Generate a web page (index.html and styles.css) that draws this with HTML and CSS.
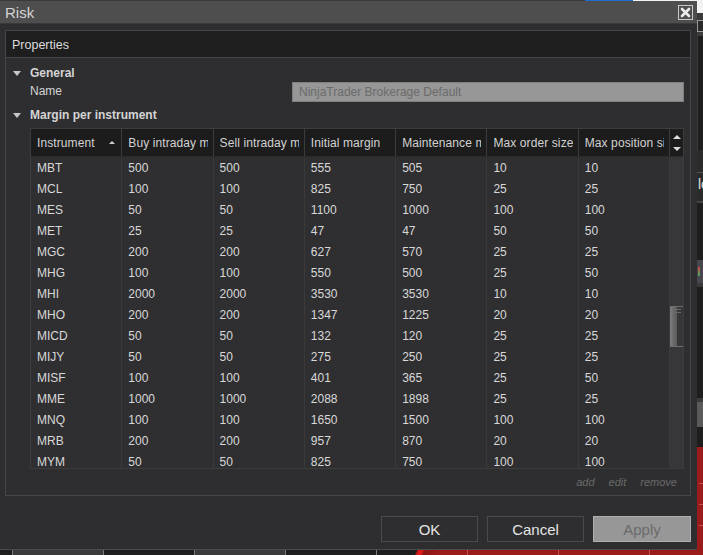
FILE: index.html
```html
<!DOCTYPE html>
<html>
<head>
<meta charset="utf-8">
<title>Risk</title>
<link rel="stylesheet" href="styles.css">
</head>
<body>
<div class="screen">
  <div class="topstrip"><div class="ts-dark"></div><div class="ts-blue"></div><div class="ts-white"></div></div>

  <div class="window">
    <div class="titlebar">
      <span class="title">Risk</span>
      <svg class="close" width="15" height="15" viewBox="0 0 15 15">
        <rect x="0.5" y="0.5" width="14" height="14" fill="#4e4e4e" stroke="#c9c9c9"/>
        <path d="M4 4 L11 11 M11 4 L4 11" stroke="#ececec" stroke-width="2.6" stroke-linecap="round"/>
      </svg>
    </div>
    <div class="content">
      <div class="panel">
        <div class="panel-head">Properties</div>
        <div class="section first"><span class="caret"></span>General</div>
        <div class="prop-row"><span class="prop-name">Name</span><div class="prop-input">NinjaTrader Brokerage Default</div></div>
        <div class="section second"><span class="caret"></span>Margin per instrument</div>
        <div class="grid">
          <div class="head">
            <div class="hcell"><span class="t">Instrument</span><span class="sort"></span></div>
            <div class="hcell"><span class="t">Buy intraday margin</span></div>
            <div class="hcell"><span class="t">Sell intraday margin</span></div>
            <div class="hcell"><span class="t">Initial margin</span></div>
            <div class="hcell"><span class="t">Maintenance margin</span></div>
            <div class="hcell"><span class="t">Max order size</span></div>
            <div class="hcell"><span class="t">Max position size</span></div>
          </div>
          <div class="shead"><span class="up"></span><span class="down"></span></div>
          <div class="body">
            <div class="row"><div class="cell">MBT</div><div class="cell">500</div><div class="cell">500</div><div class="cell">555</div><div class="cell">505</div><div class="cell">10</div><div class="cell">10</div></div>
            <div class="row"><div class="cell">MCL</div><div class="cell">100</div><div class="cell">100</div><div class="cell">825</div><div class="cell">750</div><div class="cell">25</div><div class="cell">25</div></div>
            <div class="row"><div class="cell">MES</div><div class="cell">50</div><div class="cell">50</div><div class="cell">1100</div><div class="cell">1000</div><div class="cell">100</div><div class="cell">100</div></div>
            <div class="row"><div class="cell">MET</div><div class="cell">25</div><div class="cell">25</div><div class="cell">47</div><div class="cell">47</div><div class="cell">50</div><div class="cell">50</div></div>
            <div class="row"><div class="cell">MGC</div><div class="cell">200</div><div class="cell">200</div><div class="cell">627</div><div class="cell">570</div><div class="cell">25</div><div class="cell">25</div></div>
            <div class="row"><div class="cell">MHG</div><div class="cell">100</div><div class="cell">100</div><div class="cell">550</div><div class="cell">500</div><div class="cell">25</div><div class="cell">50</div></div>
            <div class="row"><div class="cell">MHI</div><div class="cell">2000</div><div class="cell">2000</div><div class="cell">3530</div><div class="cell">3530</div><div class="cell">10</div><div class="cell">10</div></div>
            <div class="row"><div class="cell">MHO</div><div class="cell">200</div><div class="cell">200</div><div class="cell">1347</div><div class="cell">1225</div><div class="cell">20</div><div class="cell">20</div></div>
            <div class="row"><div class="cell">MICD</div><div class="cell">50</div><div class="cell">50</div><div class="cell">132</div><div class="cell">120</div><div class="cell">25</div><div class="cell">25</div></div>
            <div class="row"><div class="cell">MIJY</div><div class="cell">50</div><div class="cell">50</div><div class="cell">275</div><div class="cell">250</div><div class="cell">25</div><div class="cell">25</div></div>
            <div class="row"><div class="cell">MISF</div><div class="cell">100</div><div class="cell">100</div><div class="cell">401</div><div class="cell">365</div><div class="cell">25</div><div class="cell">50</div></div>
            <div class="row"><div class="cell">MME</div><div class="cell">1000</div><div class="cell">1000</div><div class="cell">2088</div><div class="cell">1898</div><div class="cell">25</div><div class="cell">25</div></div>
            <div class="row"><div class="cell">MNQ</div><div class="cell">100</div><div class="cell">100</div><div class="cell">1650</div><div class="cell">1500</div><div class="cell">100</div><div class="cell">100</div></div>
            <div class="row"><div class="cell">MRB</div><div class="cell">200</div><div class="cell">200</div><div class="cell">957</div><div class="cell">870</div><div class="cell">20</div><div class="cell">20</div></div>
            <div class="row"><div class="cell">MYM</div><div class="cell">50</div><div class="cell">50</div><div class="cell">825</div><div class="cell">750</div><div class="cell">100</div><div class="cell">100</div></div>
          </div>
          <div class="track">
            <div class="thumb"><span class="grip"></span><span class="grip"></span></div>
          </div>
        </div>
        <div class="actions"><span>add</span><span>edit</span><span>remove</span></div>
      </div>
      <div class="buttons">
        <button class="btn">OK</button>
        <button class="btn">Cancel</button>
        <button class="btn btn-apply">Apply</button>
      </div>
    </div>
  </div>

  <div class="rightstrip">
    <div class="rs rs-white"></div>
    <div class="rs rs-gray1"></div>
    <div class="rs rs-box"></div>
    <div class="rs rs-gray2"></div>
    <div class="rs rs-dark1"></div>
    <div class="rs rs-gray3"></div>
    <div class="rs rs-text">lo</div>
    <div class="rs rs-dark2"></div>
    <div class="rs rs-band"><span class="rs-icon"></span></div>
    <div class="rs rs-dark3"></div>
    <div class="rs rs-gray4"></div>
    <div class="rs rs-dark4"></div>
    <div class="rs rs-red"><span class="tick"></span><span class="tick"></span><span class="tick"></span></div>
  </div>

  <div class="bottomstrip">
    <div class="bs bs-a"></div>
    <div class="bs bs-light"></div>
    <div class="bs bs-dark"></div>
    <div class="bs bs-light"></div>
    <div class="bs bs-dark"></div>
    <div class="bs bs-mix"></div>
    <div class="bs bs-red"></div>
    <div class="bs bs-red"></div>
    <div class="bs bs-red bs-last"></div>
  </div>
</div>
</body>
</html>
```

FILE: styles.css
```css
body {
  margin: 0;
  background: #1e1e1e;
  font-family: "Liberation Sans", Arial, sans-serif;
}

.screen {
  display: grid;
  grid-template-columns: 697px 6px;
  grid-template-rows: 1px 549px 5px;
  width: 703px;
  height: 555px;
  overflow: hidden;
}

/* top strip (background app) */
.topstrip {
  grid-column: 1 / 3;
  display: flex;
}
.ts-dark { width: 585px; background: #3a3a3a; }
.ts-blue { width: 48px; background: #1f6fd2; }
.ts-white { flex: 1; background: #f2f2f2; }

/* dialog window */
.window {
  display: flex;
  flex-direction: column;
  background: #2e2e30;
  border-bottom: 1px solid #4a4a4a;
}

.titlebar {
  height: 22px;
  border-bottom: 1px solid #393939;
  background: #4e4e4e;
  display: flex;
  align-items: center;
  justify-content: space-between;
  padding: 0 4px 0 5px;
}
.title {
  font-size: 15px;
  color: #d4d4d4;
}
.close { display: block; }

.content {
  padding: 6px 6px 0 5px;
  display: flex;
  flex-direction: column;
}

.panel {
  height: 466px;
  box-sizing: border-box;
  border: 1px solid #464646;
  display: flex;
  flex-direction: column;
}

.panel-head {
  height: 25px;
  padding-top: 1px;
  border-bottom: 1px solid #464646;
  background: #1e1e1e;
  color: #dcdcdc;
  font-size: 12.5px;
  padding-left: 6px;
  display: flex;
  align-items: center;
}

.section {
  height: 18px;
  display: flex;
  align-items: center;
  font-weight: bold;
  font-size: 12px;
  color: #d4d4d4;
  padding-left: 7px;
}
.section.first { margin-top: 6px; }
.section.second { margin-top: 4px; }

.caret {
  width: 0;
  height: 0;
  border-left: 4px solid transparent;
  border-right: 4px solid transparent;
  border-top: 5px solid #c8c8c8;
  margin-right: 9px;
}

.prop-row {
  height: 20px;
  display: flex;
  align-items: center;
  padding-left: 24px;
  font-size: 12px;
  color: #d4d4d4;
}
.prop-name { width: 262px; margin-top: -2px; }
.prop-input {
  flex: 1;
  height: 20px;
  box-sizing: border-box;
  border: 1px solid #7f7f7f;
  background: #979797;
  color: #6b6b6b;
  font-size: 12px;
  padding-left: 6px;
  line-height: 18px;
  margin-right: 6px;
}

/* data grid */
.grid {
  margin: 4px 6px 0 24px;
  height: 341px;
  box-sizing: border-box;
  border: 1px solid #3c3c3c;
  display: grid;
  grid-template-columns: minmax(0, 1fr) 13px;
  grid-template-rows: 28px minmax(0, 1fr);
}

.head {
  display: grid;
  grid-template-columns: repeat(7, minmax(0, 1fr));
  background: #1c1c1c;
  border-bottom: 1px solid #2a2a2c;
}
.hcell {
  border-right: 1px solid #3c3c3c;
  display: flex;
  align-items: center;
  padding-left: 6px;
  font-size: 12px;
  letter-spacing: 0.1px;
  color: #d2d2d2;
  overflow: hidden;
  min-width: 0;
}
.hcell .t {
  flex: 1;
  min-width: 0;
  overflow: hidden;
  white-space: nowrap;
  margin-right: 5px;
}
.sort {
  width: 0;
  height: 0;
  border-left: 3px solid transparent;
  border-right: 3px solid transparent;
  border-bottom: 3px solid #cfcfcf;
  margin-right: 6px;
}

.shead {
  background: #1c1c1c;
  border-bottom: 1px solid #2a2a2c;
  display: flex;
  flex-direction: column;
  align-items: center;
  justify-content: center;
  gap: 8px;
}
.up, .down {
  width: 0;
  height: 0;
  border-left: 4px solid transparent;
  border-right: 4px solid transparent;
}
.up { border-bottom: 4px solid #dcdcdc; }
.down { border-top: 4px solid #dcdcdc; }

.body {
  overflow: hidden;
  background: #2f2f31;
  padding-top: 1px;
}
.row {
  display: grid;
  grid-template-columns: repeat(7, minmax(0, 1fr));
  height: 21px;
}
.cell {
  border-right: 1px solid #3a3a3a;
  padding-left: 6px;
  line-height: 21px;
  font-size: 12px;
  color: #d8d8d8;
  white-space: nowrap;
  overflow: hidden;
}

.track {
  background: #37373a;
  padding-top: 149px;
}
.thumb {
  height: 37px;
  border-top: 1px solid #6e6e6e;
  border-bottom: 1px solid #6e6e6e;
  background: linear-gradient(to right, #7c7c7c, #5a5a5a) left top / 7px 100% no-repeat;
  display: flex;
  flex-direction: column;
  align-items: flex-end;
  gap: 2px;
  padding-top: 2px;
  box-sizing: content-box;
}
.grip {
  display: block;
  width: 8px;
  height: 1px;
  background: #6a6a6a;
  margin-right: 2px;
}

.actions {
  height: 26px;
  display: flex;
  justify-content: flex-end;
  align-items: center;
  gap: 14px;
  padding-right: 13px;
  font-style: italic;
  font-size: 11px;
  color: #6a6a6a;
}

/* dialog buttons */
.buttons {
  margin-top: 20px;
  display: flex;
  justify-content: flex-end;
  gap: 9px;
}
.btn {
  width: 97px;
  height: 26px;
  box-sizing: border-box;
  border: 1px solid #4a4a4a;
  background: #2e2e30;
  color: #e4e4e4;
  font-family: "Liberation Sans", Arial, sans-serif;
  font-size: 15px;
  padding: 0;
}
.btn-apply {
  width: 98px;
  background: #979797;
  border-color: #b0b0b0;
  color: #6b6b6b;
}

/* right strip (background app) */
.rightstrip {
  display: flex;
  flex-direction: column;
  overflow: hidden;
}
.rs { flex: none; }
.rs-white { height: 12px; background: #f2f2f2; }
.rs-gray1 { height: 7px; background: #3a3a3a; }
.rs-box { height: 10px; background: #2a2a2a; border: 1px solid #9a9a9a; border-right: none; }
.rs-gray2 { height: 4px; background: #3d3d3d; }
.rs-dark1 { height: 114px; background: #1e1e1e; border-left: 1px solid #3a3a3a; }
.rs-gray3 { height: 22px; background: #2b2b2b; border-bottom: 1px solid #555; }
.rs-text {
  height: 28px;
  background: #2b2b2b;
  border-bottom: 2px solid #444;
  color: #e0e0e0;
  font-size: 14px;
  line-height: 22px;
  padding-left: 1px;
  overflow: hidden;
}
.rs-dark2 { height: 57px; background: #1e1e1e; }
.rs-band {
  height: 23px;
  background: #47474d;
  border-bottom: 4px solid #3a3a3a;
  display: flex;
  align-items: center;
  padding-left: 1px;
}
.rs-icon {
  width: 2px;
  height: 9px;
  background: linear-gradient(#d04040, #40b060);
}
.rs-dark3 { height: 111px; background: #1e1e1e; }
.rs-gray4 { height: 25px; background: #5a5a5a; border-top: 4px solid #3a3a3a; }
.rs-dark4 { height: 20px; background: #1e1e1e; }
.rs-red {
  flex: 1;
  background: #9b1a1a;
  display: flex;
  flex-direction: column;
  align-items: flex-end;
  gap: 20px;
  padding-top: 36px;
}
.tick {
  display: block;
  width: 4px;
  height: 1px;
  background: #c45454;
}

/* bottom strip (background app) */
.bottomstrip {
  grid-column: 1 / 3;
  display: flex;
}
.bs { flex: none; width: 90px; border-left: 1px solid #7a7a7a; }
.bs-a { width: 12px; border-left: none; background: #1e1e1e; }
.bs-light { background: #3b3b3b; }
.bs-dark { background: #1e1e1e; }
.bs-mix {
  background: linear-gradient(115deg, #1e1e1e 0, #1e1e1e 36px, #e01818 38px, #e01818 41px, #8c1414 44px, #9b1a1a 57px);
}
.bs-red { background: #9b1a1a; border-left-color: #c05050; }
.bs-last { flex: 1; }
```
